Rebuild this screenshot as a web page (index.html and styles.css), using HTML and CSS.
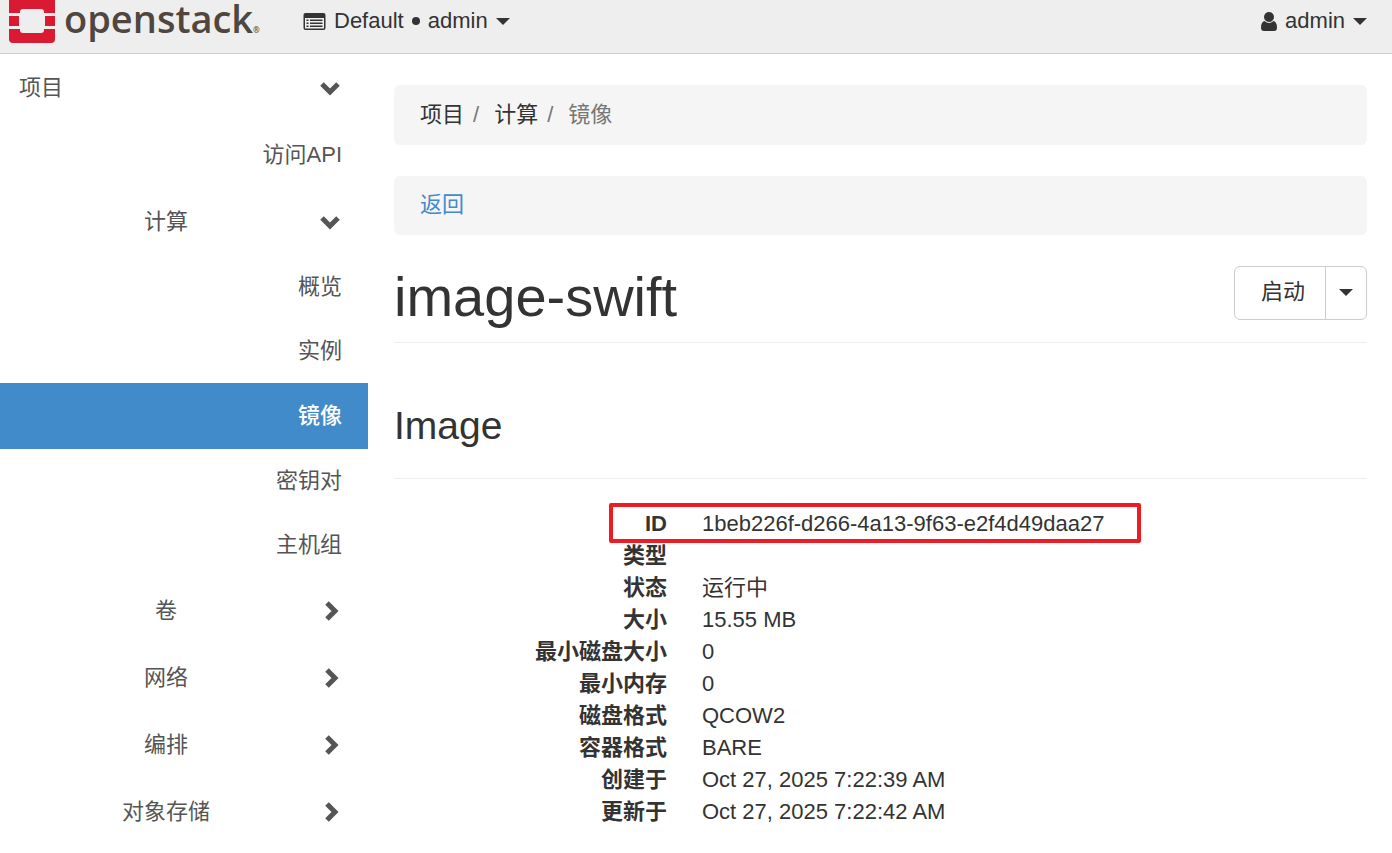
FILE: index.html
```html
<!DOCTYPE html>
<html lang="zh-CN">
<head>
    <meta charset="UTF-8">
    <meta name="viewport" content="width=device-width, initial-scale=1.0">
    <title>image-swift - OpenStack Dashboard</title>
    <link rel="stylesheet" href="styles.css">
</head>
<body>
    <!-- Top bar -->
    <header class="navbar">
        <a class="brand" href="#">
            <svg class="brand-mark" viewBox="0 0 46 43" aria-hidden="true">
                <path d="M0 0h46v13H35v-1a3 3 0 0 0-3-3H14a3 3 0 0 0-3 3v1H0z"/>
                <path d="M0 16h10v10H0zM36 16h10v10H36z"/>
                <path d="M0 29h11v1a3 3 0 0 0 3 3h18a3 3 0 0 0 3-3v-1h11v10a4 4 0 0 1-4 4H4a4 4 0 0 1-4-4z"/>
            </svg>
            <span class="brand-name">openstack<small>®</small></span>
        </a>
        <button class="nav-button" type="button">
            <svg class="icon-list" viewBox="0 0 22 17" aria-hidden="true">
                <path fill-rule="evenodd" d="M2 0h18a2 2 0 0 1 2 2v13a2 2 0 0 1-2 2H2a2 2 0 0 1-2-2V2a2 2 0 0 1 2-2zM1.500 5v10q0 .6.600.6h17.800q.6 0 .6-.6V5z"/>
                <path d="M3 6.500h2V8H3zM3 9.500h2V11H3zM3 12.500h2V14H3zM6.500 6.500H19V8H6.500zM6.500 9.500H19V11H6.500zM6.500 12.500H19V14H6.500z"/>
            </svg>
            <span>Default</span>
            <span class="dot"></span>
            <span>admin</span>
            <span class="caret"></span>
        </button>
        <button class="nav-button user" type="button">
            <svg class="icon-user" viewBox="0 0 16 19" aria-hidden="true">
                <circle cx="8" cy="5" r="5"/>
                <path d="M3.500 9Q8 12.800 12.500 9 16 10 16 15.500q0 3.500-3 3.500H3q-3 0-3-3.500Q0 10 3.500 9z"/>
            </svg>
            <span>admin</span>
            <span class="caret"></span>
        </button>
    </header>

    <div class="page">
        <!-- Sidebar -->
        <nav class="sidebar">
            <a class="dashboard" href="#">项目
                <svg class="chevron" viewBox="0 0 22 22"><path d="M2 7l8 8 8-8"/></svg>
            </a>
            <a class="group-link" href="#">访问API</a>
            <a class="group" href="#"><span>计算</span>
                <svg class="chevron" viewBox="0 0 22 22"><path d="M2 7l8 8 8-8"/></svg>
            </a>
            <a class="panel" href="#">概览</a>
            <a class="panel" href="#">实例</a>
            <a class="panel active" href="#">镜像</a>
            <a class="panel" href="#">密钥对</a>
            <a class="panel" href="#">主机组</a>
            <a class="group" href="#"><span>卷</span>
                <svg class="chevron" viewBox="0 0 22 22"><path d="M7 3l8 8-8 8"/></svg>
            </a>
            <a class="group" href="#"><span>网络</span>
                <svg class="chevron" viewBox="0 0 22 22"><path d="M7 3l8 8-8 8"/></svg>
            </a>
            <a class="group" href="#"><span>编排</span>
                <svg class="chevron" viewBox="0 0 22 22"><path d="M7 3l8 8-8 8"/></svg>
            </a>
            <a class="group" href="#"><span>对象存储</span>
                <svg class="chevron" viewBox="0 0 22 22"><path d="M7 3l8 8-8 8"/></svg>
            </a>
        </nav>

        <!-- Image details -->
        <main class="content">
            <ol class="breadcrumb">
                <li><a href="#">项目</a></li>
                <li><a href="#">计算</a></li>
                <li class="current">镜像</li>
            </ol>
            <div class="back-bar"><a href="#">返回</a></div>

            <div class="page-header">
                <h1>image-swift</h1>
                <div class="btn-group">
                    <button type="button" class="btn">启动</button>
                    <button type="button" class="btn btn-caret" aria-label="更多操作"><span class="caret"></span></button>
                </div>
            </div>

            <h3>Image</h3>
            <dl class="details">
                <dt>ID</dt>
                <dd>1beb226f-d266-4a13-9f63-e2f4d49daa27</dd>
                <dt>类型</dt>
                <dd></dd>
                <dt>状态</dt>
                <dd>运行中</dd>
                <dt>大小</dt>
                <dd>15.55 MB</dd>
                <dt>最小磁盘大小</dt>
                <dd>0</dd>
                <dt>最小内存</dt>
                <dd>0</dd>
                <dt>磁盘格式</dt>
                <dd>QCOW2</dd>
                <dt>容器格式</dt>
                <dd>BARE</dd>
                <dt>创建于</dt>
                <dd>Oct 27, 2025 7:22:39 AM</dd>
                <dt>更新于</dt>
                <dd>Oct 27, 2025 7:22:42 AM</dd>
            </dl>
        </main>
    </div>
</body>
</html>
```
FILE: styles.css
```css
*,
*::before,
*::after {
    box-sizing: border-box;
}
body {
    margin: 0;
    font-family: "Liberation Sans", "Noto Sans CJK SC", sans-serif;
    font-size: 22px;
    line-height: 32px;
    color: #333;
    background-color: #fff;
}
a {
    color: #428bca;
    text-decoration: none;
}
button {
    font: inherit;
    color: inherit;
    cursor: pointer;
}

/* Top bar */
.navbar {
    display: flex;
    align-items: flex-start;
    height: 54px;
    padding: 0 25px 0 9px;
    background-color: #eee;
    border-bottom: 1px solid #ccc;
}
.brand {
    display: flex;
    gap: 9px;
    width: 294px;
}
.brand-mark {
    width: 46px;
    height: 43px;
    fill: #da1a32;
}
.brand-name {
    font-family: "Open Sans", sans-serif;
    font-size: 38px;
    font-weight: 600;
    line-height: 36px;
    color: #4f463f;
}
.brand-name small {
    font-size: 8px;
}
.nav-button {
    display: flex;
    align-items: center;
    gap: 8px;
    padding: 5px 0 3px;
    border: 0;
    background: none;
}
.user {
    margin-left: auto;
}
.icon-list {
    width: 23px;
    height: 17px;
    fill: #333;
}
.icon-user {
    width: 16px;
    height: 19px;
    fill: #333;
}
.dot {
    width: 8px;
    height: 8px;
    border-radius: 50%;
    background-color: #333;
}
.caret {
    display: inline-block;
    border-top: 7px solid #333;
    border-left: 7px solid transparent;
    border-right: 7px solid transparent;
}

.page {
    display: flex;
}

/* Sidebar */
.sidebar {
    flex: 0 0 368px;
}
.sidebar a {
    display: flex;
    align-items: center;
    justify-content: flex-end;
    height: 67px;
    padding: 0 26px 0 12px;
    color: #555;
}
.sidebar .dashboard {
    justify-content: space-between;
    padding-left: 19px;
}
.sidebar .group span {
    flex: 1;
    text-align: center;
}
.sidebar .panel {
    height: 64px;
}
.sidebar .active {
    height: 66px;
    color: #fff;
    font-weight: 500;
    background-color: #428bca;
}
.chevron {
    width: 22px;
    height: 22px;
    fill: none;
    stroke: #555;
    stroke-width: 5;
}

/* Content */
.content {
    flex: 1;
    padding: 31px 25px 26px 26px;
}
.breadcrumb,
.back-bar {
    margin: 0 0 31px;
    padding: 14px 26px;
    border-radius: 6px;
    background-color: #f5f5f5;
}
.back-bar {
    padding: 13px 26px 14px;
}
.breadcrumb {
    display: flex;
    list-style: none;
}
.breadcrumb a {
    color: #333;
}
.breadcrumb li + li::before {
    content: "/";
    padding: 0 15px 0 9px;
    color: #777;
}
.breadcrumb .current {
    color: #777;
}
.page-header {
    display: flex;
    justify-content: space-between;
    align-items: flex-start;
    padding-bottom: 14px;
    border-bottom: 1px solid #eee;
}
h1 {
    margin: 0;
    font-size: 56px;
    font-weight: normal;
    line-height: 62px;
}
.btn-group {
    display: flex;
}
.btn {
    height: 54px;
    padding: 0 20px 2px 26px;
    border: 1px solid #ccc;
    border-radius: 6px 0 0 6px;
    background-color: #fff;
}
.btn-caret {
    display: flex;
    align-items: center;
    margin-left: -1px;
    padding: 0 13px 2px;
    border-radius: 0 6px 6px 0;
}
h3 {
    margin: 61px 0 0;
    padding-bottom: 30px;
    border-bottom: 1px solid #eee;
    font-size: 39px;
    font-weight: normal;
    line-height: 44px;
}
.details {
    position: relative;
    display: grid;
    grid-template-columns: 273px 1fr;
    column-gap: 35px;
    grid-auto-rows: 32px;
    margin: 29px 0 0;
}
.details dt {
    font-weight: bold;
    text-align: right;
}
.details dd {
    margin: 0;
}
/* Red frame around the image ID */
.details::after {
    content: "";
    position: absolute;
    top: -5px;
    left: 215px;
    width: 532px;
    height: 40px;
    border: 4px solid #ed1c24;
    border-radius: 2px;
}
```
